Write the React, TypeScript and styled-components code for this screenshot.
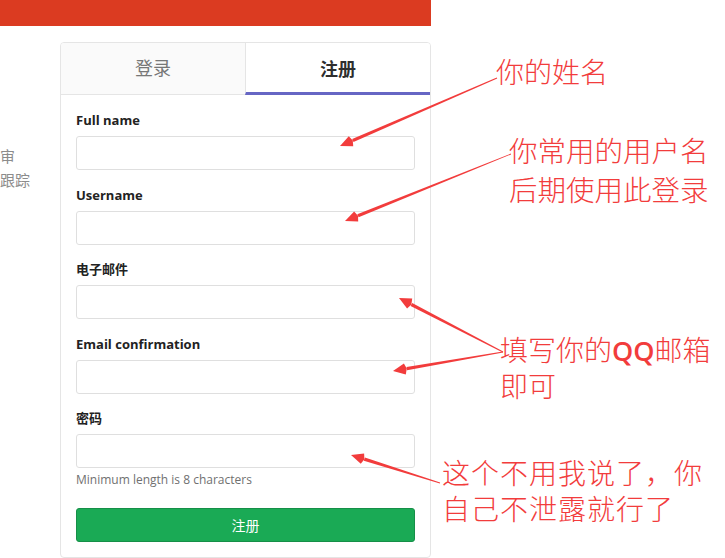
import styled, { createGlobalStyle } from "styled-components";

const GlobalStyle = createGlobalStyle`
  html, body {
    margin: 0;
    padding: 0;
    background: #ffffff;
  }
  body {
    font-family: "Open Sans", "Noto Sans CJK SC", sans-serif;
    color: #2e2e2e;
  }
  * {
    box-sizing: border-box;
  }
`;

const Page = styled.div`
  position: relative;
  width: 725px;
  height: 558px;
  overflow: hidden;
  display: flex;
  flex-direction: column;
`;

const TopBar = styled.div`
  width: 431px;
  height: 26px;
  background-color: #db3b21;
`;

const Body = styled.div`
  display: flex;
  margin-top: 16px;
`;

const Side = styled.div`
  width: 60px;
  padding-top: 102px;
  font-size: 15px;
  line-height: 24px;
  color: #8c8c8c;
  overflow: hidden;
  white-space: nowrap;
`;

const Card = styled.div`
  width: 371px;
  border: 1px solid #e5e5e5;
  border-radius: 4px;
  overflow: hidden;
`;

const Tabs = styled.div`
  display: flex;
  height: 52px;
`;

const Tab = styled.div<{ $active?: boolean }>`
  flex: 1;
  display: flex;
  align-items: center;
  justify-content: center;
  font-size: 18px;
  font-weight: ${(p) => (p.$active ? 700 : 400)};
  color: ${(p) => (p.$active ? "#2e2e2e" : "#777777")};
  background-color: ${(p) => (p.$active ? "#ffffff" : "#fafafa")};
  border-bottom: ${(p) => (p.$active ? "3px solid #6666c4" : "1px solid #e5e5e5")};
  padding-bottom: ${(p) => (p.$active ? "0" : "3px")};
  & + & {
    border-left: 1px solid #e5e5e5;
  }
`;

const Form = styled.form`
  padding: 16px 15px 15px;
  display: flex;
  flex-direction: column;
`;

const Field = styled.div`
  display: flex;
  flex-direction: column;
  margin-bottom: 15.5px;
`;

const Label = styled.label`
  font-size: 13px;
  font-weight: 700;
  line-height: 18px;
  margin-bottom: 7px;
  color: #222222;
`;

const Input = styled.input`
  height: 34px;
  width: 100%;
  border: 1px solid #dfdfdf;
  border-radius: 3px;
  background: #ffffff;
  padding: 6px 10px;
  font-size: 13px;
  outline: none;
`;

const Hint = styled.p`
  margin: 4px 0 0;
  font-size: 12px;
  line-height: 16px;
  color: #707070;
`;

const SubmitButton = styled.button`
  margin-top: 4px;
  height: 34px;
  width: 100%;
  border: 1px solid #168f48;
  border-radius: 3px;
  background-color: #1aaa55;
  color: #ffffff;
  font-family: "Open Sans", "Noto Sans CJK SC", sans-serif;
  font-size: 14px;
`;

// notes sit on a Latin primary font so the line boxes stay tight; the
// Chinese glyphs come from the CJK fallback
const Note = styled.div<{ $size?: number; $lh?: number; $spacing?: number }>`
  position: absolute;
  font-family: "Liberation Sans", "Noto Sans CJK SC", sans-serif;
  font-weight: 300;
  font-size: ${(p) => p.$size ?? 28}px;
  line-height: ${(p) => p.$lh ?? 36}px;
  letter-spacing: ${(p) => p.$spacing ?? 0}px;
  color: #f23c3c;
  white-space: nowrap;
`;

const NoteLine = styled.div`
  display: block;
`;

const QQ = styled.span`
  font-family: "Open Sans", sans-serif;
  font-weight: 600;
  font-size: 27px;
`;

const Overlay = styled.svg`
  position: absolute;
  left: 0;
  top: 0;
  pointer-events: none;
`;

type Arrow = [number, number, number, number];

const arrows: Arrow[] = [
  [497, 78, 340, 146],
  [511, 154, 345, 221],
  [503, 352, 399, 298],
  [503, 352, 393, 371],
  [440, 483, 351, 455],
];

const arrowShape = ([x1, y1, x2, y2]: Arrow) => {
  const dx = x2 - x1;
  const dy = y2 - y1;
  const len = Math.hypot(dx, dy);
  const ux = dx / len;
  const uy = dy / len;
  const nx = -uy;
  const ny = ux;
  const head = 14;
  const bx = x2 - ux * head;
  const by = y2 - uy * head;
  const p = (x: number, y: number) => `${x.toFixed(1)},${y.toFixed(1)}`;
  const shaft = [
    p(x1 + nx * 0.4, y1 + ny * 0.4),
    p(bx + nx * 1.7, by + ny * 1.7),
    p(bx - nx * 1.7, by - ny * 1.7),
    p(x1 - nx * 0.4, y1 - ny * 0.4),
  ].join(" ");
  const tip = [
    p(x2, y2),
    p(bx + nx * 5.5 + ux * 2, by + ny * 5.5 + uy * 2),
    p(bx, by),
    p(bx - nx * 5.5 + ux * 2, by - ny * 5.5 + uy * 2),
  ].join(" ");
  return { shaft, tip };
};

const fields = ["Full name", "Username", "电子邮件", "Email confirmation"];

const App = () => {
  return (
    <Page>
      <GlobalStyle />
      <TopBar />
      <Body>
        <Side>
          <div>审</div>
          <div>跟踪</div>
        </Side>
        <Card>
          <Tabs>
            <Tab>登录</Tab>
            <Tab $active>注册</Tab>
          </Tabs>
          <Form onSubmit={(e) => e.preventDefault()}>
            {fields.map((f) => (
              <Field key={f}>
                <Label>{f}</Label>
                <Input type="text" />
              </Field>
            ))}
            <Field>
              <Label>密码</Label>
              <Input type="password" />
              <Hint>Minimum length is 8 characters</Hint>
            </Field>
            <SubmitButton type="submit">注册</SubmitButton>
          </Form>
        </Card>
      </Body>

      <Note $size={28} $lh={30} style={{ left: 496, top: 59 }}>
        你的姓名
      </Note>
      <Note $size={28.5} $lh={39} style={{ left: 509, top: 133 }}>
        <NoteLine>你常用的用户名</NoteLine>
        <NoteLine>后期使用此登录</NoteLine>
      </Note>
      <Note style={{ left: 500, top: 333 }}>
        <NoteLine>
          填写你的<QQ>QQ</QQ>邮箱
        </NoteLine>
        <NoteLine>即可</NoteLine>
      </Note>
      <Note $spacing={1} style={{ left: 442, top: 457 }}>
        <NoteLine>这个不用我说了，你</NoteLine>
        <NoteLine>自己不泄露就行了</NoteLine>
      </Note>

      <Overlay width={725} height={558} viewBox="0 0 725 558">
        {arrows.map((a, i) => {
          const s = arrowShape(a);
          return (
            <g key={i} fill="#f23c3c">
              <polygon points={s.shaft} />
              <polygon points={s.tip} />
            </g>
          );
        })}
      </Overlay>
    </Page>
  );
};

export default App;
